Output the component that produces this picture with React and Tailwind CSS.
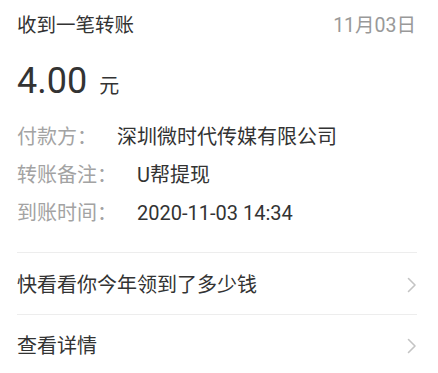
import React from "react";

const Chevron = () => (
  <svg width="10" height="16" viewBox="0 0 10 16" fill="none">
    <path d="M1.5 1.5 L8 8 L1.5 14.5" stroke="#c4c4c4" strokeWidth="1.6" strokeLinecap="round" strokeLinejoin="round" />
  </svg>
);

export default function App() {
  const font = { fontFamily: "Roboto, 'Noto Sans CJK SC', sans-serif" };
  return (
    <div className="w-[438px] h-[373px] bg-white overflow-hidden pl-[17px] pr-[21px]" style={font}>
      <div className="flex items-center justify-between pt-[13px] h-[39px] leading-[26px]">
        <span className="text-[19.5px] text-[#333333]">收到一笔转账</span>
        <span className="text-[19.5px] text-[#999999] mr-[1px]">11月03日</span>
      </div>
      <div className="mt-[20px] h-[44px] flex items-baseline leading-[44px]">
        <span className="text-[36px] text-[#333333]">4.00</span>
        <span className="ml-3 text-[20px] text-[#333333]">元</span>
      </div>
      <div className="mt-[15px] text-[20px] leading-[38px]">
        <div className="flex">
          <span className="text-[#a3a3a3] w-[100px]">付款方：</span>
          <span className="text-[#333333]">深圳微时代传媒有限公司</span>
        </div>
        <div className="flex">
          <span className="text-[#a3a3a3] w-[120px]">转账备注：</span>
          <span className="text-[#333333]">U帮提现</span>
        </div>
        <div className="flex">
          <span className="text-[#a3a3a3] w-[120px]">到账时间：</span>
          <span className="text-[#333333]">2020-11-03 14:34</span>
        </div>
      </div>
      <div className="mt-[20px] h-px bg-[#ededed]" />
      <div className="h-[61px] pt-[2px] flex items-center justify-between">
        <span className="text-[20px] text-[#333333]">快看看你今年领到了多少钱</span>
        <Chevron />
      </div>
      <div className="h-px bg-[#ededed]" />
      <div className="h-[62px] flex items-center justify-between">
        <span className="text-[20px] text-[#333333]">查看详情</span>
        <Chevron />
      </div>
    </div>
  );
}
